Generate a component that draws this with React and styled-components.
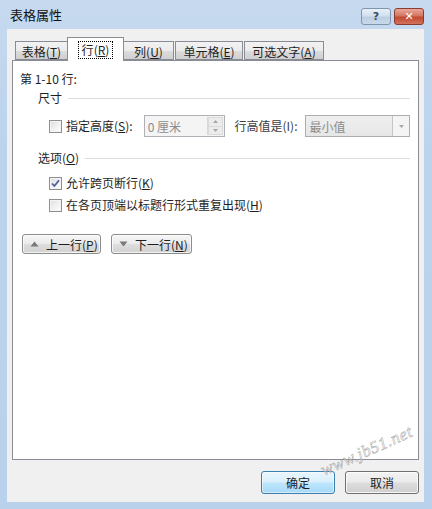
import React from 'react';
import styled, { createGlobalStyle } from 'styled-components';

const GlobalStyle = createGlobalStyle`
  html, body {
    margin: 0;
    padding: 0;
    background: #b9d1ea;
  }
  body {
    font-family: "Noto Sans CJK SC", "Noto Sans", sans-serif;
    font-size: 12px;
    color: #1e1e1e;
  }
`;

const Window = styled.div`
  position: relative;
  width: 432px;
  height: 509px;
  box-sizing: border-box;
  background: linear-gradient(180deg, #c6d9ef 0%, #bcd3ec 30%, #b9d1ea 100%);
  display: flex;
  flex-direction: column;
  overflow: hidden;
`;

const TitleBar = styled.div`
  height: 29px;
  display: flex;
  align-items: flex-start;
  justify-content: space-between;
  padding: 0 8px 0 10px;
  box-sizing: border-box;
`;

const Title = styled.div`
  font-size: 13px;
  line-height: 14px;
  margin-top: 8px;
  color: #111;
`;

const TitleButtons = styled.div`
  display: flex;
  gap: 3px;
  margin-top: 8px;
`;

const CaptionButton = styled.div`
  width: 30px;
  height: 17px;
  box-sizing: border-box;
  border: 1px solid ${(p) => (p.$close ? '#8c3b33' : '#7f95ae')};
  border-radius: 3px;
  background: ${(p) =>
    p.$close
      ? 'linear-gradient(180deg, #e9a99b 0%, #d4765f 45%, #c24a31 55%, #d0735a 100%)'
      : 'linear-gradient(180deg, #e8f0f8 0%, #d3e0ee 45%, #bccee3 55%, #c9d9ea 100%)'};
  display: flex;
  align-items: center;
  justify-content: center;
  color: ${(p) => (p.$close ? '#fff' : '#3a4b60')};
  font-family: "DejaVu Sans", sans-serif;
  font-weight: bold;
  font-size: 11px;
  line-height: 1;
`;

const Client = styled.div`
  margin: 0 8px 7px 7px;
  flex: 1;
  background: #f0f0f0;
  padding: 8px 5px 0 5px;
  display: flex;
  flex-direction: column;
`;

const TabRow = styled.div`
  display: flex;
  align-items: flex-end;
  height: 23px;
  padding-left: 3px;
  position: relative;
  z-index: 1;
`;

const Tab = styled.div`
  width: ${(p) => (p.$active ? p.$w + 4 : p.$w)}px;
  height: ${(p) => (p.$active ? 24 : 19)}px;
  margin: 0 ${(p) => (p.$active ? -1 : 1)}px 0 ${(p) => (p.$active ? -2 : 0)}px;
  box-sizing: border-box;
  border: 1px solid #898c95;
  border-bottom: ${(p) => (p.$active ? 'none' : '1px solid #898c95')};
  background: ${(p) =>
    p.$active ? '#ffffff' : 'linear-gradient(180deg, #f2f2f2 0%, #ebebeb 50%, #dddddd 51%, #cfcfcf 100%)'};
  display: flex;
  align-items: center;
  justify-content: center;
  padding-top: ${(p) => (p.$active ? 0 : 1)}px;
  font-size: 12px;
  color: #1e1e1e;
  ${(p) => p.$active && 'margin-bottom: -1px;'}
`;

const Focus = styled.span`
  outline: 1px dotted #000;
  padding: 1px 3px;
  line-height: 14px;
`;

const Key = styled.span`
  text-decoration: underline;
  text-underline-offset: 1px;
`;

const Panel = styled.div`
  height: 400px;
  box-sizing: border-box;
  background: #ffffff;
  border: 1px solid #898c95;
  padding: 11px 8px 0 7px;
  display: flex;
  flex-direction: column;
`;

const Heading = styled.div`
  line-height: 14px;
  height: 14px;
`;

const Group = styled.div`
  display: flex;
  align-items: center;
  gap: 6px;
  height: 14px;
  margin: ${(p) => p.$top}px 0 0 18px;
  line-height: 14px;
  &::after {
    content: '';
    flex: 1;
    height: 1px;
    background: #dcdcdc;
    margin-top: 1px;
  }
`;

const Row = styled.div`
  display: flex;
  align-items: center;
  margin: ${(p) => p.$top}px 0 0 29px;
  height: ${(p) => p.$h || 14}px;
`;

const CheckBox = styled.span`
  width: 13px;
  height: 13px;
  box-sizing: border-box;
  border: 1px solid #8e8f8f;
  background: linear-gradient(135deg, #dcdcdc 0%, #f0f0f0 50%, #ffffff 100%);
  box-shadow: inset 0 0 0 1px #f4f4f4;
  margin-right: 4px;
  display: flex;
  align-items: center;
  justify-content: center;
  flex: none;
`;

const Label = styled.span`
  color: ${(p) => (p.$dim ? '#3c3c3c' : '#1e1e1e')};
  white-space: nowrap;
  line-height: 14px;
`;

const SpinBox = styled.div`
  margin-left: 11px;
  width: 82px;
  height: 22px;
  box-sizing: border-box;
  border: 1px solid #aeb2b7;
  background: #f4f4f4;
  display: flex;
  align-items: stretch;
`;

const FieldText = styled.div`
  flex: 1;
  display: flex;
  align-items: center;
  padding-left: 3px;
  color: #8c8c8c;
  font-size: 12px;
`;

const Spinner = styled.div`
  width: 15px;
  display: flex;
  flex-direction: column;
  border-left: 1px solid #d8d8d8;
  margin: 1px;
`;

const SpinPart = styled.div`
  flex: 1;
  display: flex;
  align-items: center;
  justify-content: center;
  background: #ececec;
  border: 1px solid #dadada;
  & + & {
    border-top: none;
  }
`;

const Select = styled.div`
  margin-left: 8px;
  width: 106px;
  height: 22px;
  box-sizing: border-box;
  border: 1px solid #adadad;
  background: linear-gradient(180deg, #efefef 0%, #e6e6e6 100%);
  display: flex;
`;

const SelectArrow = styled.div`
  width: 16px;
  border-left: 1px solid #c6c6c6;
  background: #f4f4f4;
  display: flex;
  align-items: center;
  justify-content: center;
`;

const NavRow = styled.div`
  display: flex;
  gap: 10px;
  margin: 22px 0 0 2px;
`;

const NavButton = styled.div`
  width: ${(p) => p.$w}px;
  height: 20px;
  box-sizing: border-box;
  border: 1px solid #8d8d8d;
  border-radius: 3px;
  background: linear-gradient(180deg, #f6f6f6 0%, #ebebeb 48%, #dddddd 52%, #d2d2d2 100%);
  box-shadow: inset 0 0 0 1px rgba(255, 255, 255, 0.7);
  display: flex;
  align-items: center;
  padding-left: 7px;
  gap: 7px;
  color: #1e1e1e;
`;

const Footer = styled.div`
  display: flex;
  justify-content: flex-end;
  gap: 10px;
  padding: 11px 0 0 0;
`;

const DialogButton = styled.div`
  width: 74px;
  height: 23px;
  box-sizing: border-box;
  border: 1px solid ${(p) => (p.$default ? '#3c7fb1' : '#707070')};
  border-radius: 3px;
  background: ${(p) =>
    p.$default
      ? 'linear-gradient(180deg, #eaf6fd 0%, #d9f0fc 48%, #bee6fd 52%, #a7d9f5 100%)'
      : 'linear-gradient(180deg, #f2f2f2 0%, #ebebeb 48%, #dddddd 52%, #cfcfcf 100%)'};
  box-shadow: inset 0 0 0 1px ${(p) => (p.$default ? 'rgba(255,255,255,0.5)' : 'rgba(255,255,255,0.8)')};
  display: flex;
  align-items: center;
  justify-content: center;
  color: #1e1e1e;
`;

const Watermark = styled.div`
  position: absolute;
  left: 318px;
  top: 462px;
  transform: rotate(-24deg);
  transform-origin: left top;
  font-family: "Liberation Serif", serif;
  font-style: italic;
  font-size: 17px;
  color: rgba(255, 255, 255, 0.6);
  -webkit-text-stroke: 0.6px rgba(110, 110, 110, 0.55);
  letter-spacing: 0.5px;
  pointer-events: none;
`;

const Tri = ({ up }) => (
  <svg width="9" height="6" viewBox="0 0 9 6">
    <path d={up ? 'M0.5 5.5 L4.5 0.5 L8.5 5.5 Z' : 'M0.5 0.5 L4.5 5.5 L8.5 0.5 Z'} fill="#7a7a7a" />
  </svg>
);

const SmallTri = ({ up }) => (
  <svg width="5" height="3" viewBox="0 0 5 3">
    <path d={up ? 'M0 3 L2.5 0 L5 3 Z' : 'M0 0 L2.5 3 L5 0 Z'} fill="#a8a8a8" />
  </svg>
);

const Check = () => (
  <svg width="9" height="9" viewBox="0 0 9 9">
    <path d="M1 4.5 L3.4 7 L8 1.3" fill="none" stroke="#4a5f97" strokeWidth="1.8" />
  </svg>
);

const tabs = [
  { t: '表格', k: 'T', w: 53 },
  { t: '行', k: 'R', w: 53, active: true },
  { t: '列', k: 'U', w: 51 },
  { t: '单元格', k: 'E', w: 68 },
  { t: '可选文字', k: 'A', w: 80 },
];

export default function App() {
  return (
    <>
      <GlobalStyle />
      <Window>
        <TitleBar>
          <Title>表格属性</Title>
          <TitleButtons>
            <CaptionButton>?</CaptionButton>
            <CaptionButton $close>✕</CaptionButton>
          </TitleButtons>
        </TitleBar>
        <Client>
          <TabRow>
            {tabs.map((tab) => (
              <Tab key={tab.k} $w={tab.w} $active={tab.active}>
                {tab.active ? (
                  <Focus>
                    {tab.t}(<Key>{tab.k}</Key>)
                  </Focus>
                ) : (
                  <span>
                    {tab.t}(<Key>{tab.k}</Key>)
                  </span>
                )}
              </Tab>
            ))}
          </TabRow>
          <Panel>
            <Heading>第 1-10 行:</Heading>
            <Group $top={5}>尺寸</Group>
            <Row $top={10} $h={22}>
              <CheckBox />
              <Label>
                指定高度(<Key>S</Key>):
              </Label>
              <SpinBox>
                <FieldText>0 厘米</FieldText>
                <Spinner>
                  <SpinPart>
                    <SmallTri up />
                  </SpinPart>
                  <SpinPart>
                    <SmallTri />
                  </SpinPart>
                </Spinner>
              </SpinBox>
              <Label $dim style={{ marginLeft: 10 }}>
                行高值是(I):
              </Label>
              <Select>
                <FieldText>最小值</FieldText>
                <SelectArrow>
                  <SmallTri />
                </SelectArrow>
              </Select>
            </Row>
            <Group $top={14}>
              <span>
                选项(<Key>O</Key>)
              </span>
            </Group>
            <Row $top={11}>
              <CheckBox>
                <Check />
              </CheckBox>
              <Label>
                允许跨页断行(<Key>K</Key>)
              </Label>
            </Row>
            <Row $top={8}>
              <CheckBox />
              <Label>
                在各页顶端以标题行形式重复出现(<Key>H</Key>)
              </Label>
            </Row>
            <NavRow>
              <NavButton $w={79}>
                <Tri up />
                <span>
                  上一行(<Key>P</Key>)
                </span>
              </NavButton>
              <NavButton $w={81}>
                <Tri />
                <span>
                  下一行(<Key>N</Key>)
                </span>
              </NavButton>
            </NavRow>
          </Panel>
          <Footer>
            <DialogButton $default>确定</DialogButton>
            <DialogButton>取消</DialogButton>
          </Footer>
        </Client>
        <Watermark>www.jb51.net</Watermark>
      </Window>
    </>
  );
}
